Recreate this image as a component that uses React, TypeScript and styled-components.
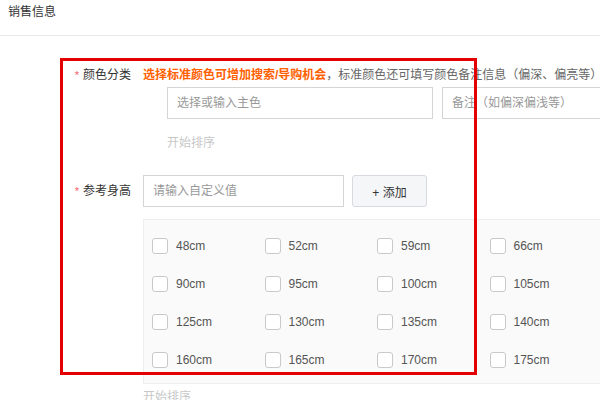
import React from "react";
import styled, { createGlobalStyle } from "styled-components";

const GlobalStyle = createGlobalStyle`
  html, body {
    margin: 0;
    padding: 0;
    overflow: hidden;
    background: #fff;
  }
  body {
    font-family: "Liberation Sans", "Noto Sans CJK SC", sans-serif;
    font-size: 12px;
    color: #333;
  }
`;

const Page = styled.div`
  position: relative;
  width: 600px;
  height: 400px;
  overflow: hidden;
`;

const SectionTitle = styled.div`
  height: 35px;
  line-height: 24px;
  padding-left: 8px;
  font-size: 12px;
  color: #333;
  border-bottom: 1px solid #e8e8e8;
`;

const Form = styled.div`
  padding-top: 29px;
`;

const FormRow = styled.div<{ $gap?: number }>`
  display: flex;
  margin-top: ${({ $gap }) => $gap ?? 0}px;
`;

const Label = styled.div<{ $top?: number }>`
  width: 131px;
  padding-right: 12px;
  flex-shrink: 0;
  text-align: right;
  line-height: 20px;
  margin-top: ${({ $top }) => $top ?? 0}px;
  white-space: nowrap;
`;

const Star = styled.span`
  color: #f4606c;
  margin-right: 4px;
  font-size: 11px;
`;

const Content = styled.div`
  flex: 1;
  min-width: 0;
`;

const Tip = styled.div`
  line-height: 20px;
  white-space: nowrap;
  color: #666;
`;

const Highlight = styled.b`
  color: #ff6000;
  font-weight: bold;
`;

const Indented = styled.div`
  padding-left: 24px;
`;

const InputGroup = styled.div<{ $top?: number }>`
  display: flex;
  align-items: center;
  gap: 9px;
  margin-top: ${({ $top }) => $top ?? 0}px;
`;

const TextInput = styled.input<{ $width: number }>`
  box-sizing: border-box;
  width: ${({ $width }) => $width}px;
  height: 32px;
  padding: 0 9px;
  flex-shrink: 0;
  border: 1px solid #d5d5d5;
  border-radius: 0;
  font-family: inherit;
  font-size: 12px;
  color: #333;
  outline: none;
  &::placeholder {
    color: #999;
  }
`;

const AddButton = styled.button`
  box-sizing: border-box;
  width: 75px;
  height: 32px;
  margin-left: -1px;
  border: 1px solid #d8dadf;
  border-radius: 3px;
  background: #f5f6f8;
  font-family: inherit;
  font-size: 12px;
  color: #333;
`;

const SortLink = styled.div<{ $top: number }>`
  margin-top: ${({ $top }) => $top}px;
  line-height: 20px;
  color: #c8c8c8;
`;

const OptionPanel = styled.div`
  margin-top: 12px;
  width: 570px;
  padding: 7px 0 4px 8px;
  background: #fafafa;
  border: 1px solid #eeeeee;
  display: grid;
  grid-template-columns: repeat(5, 112.5px);
  grid-auto-rows: 38px;
`;

const Option = styled.label`
  display: flex;
  align-items: center;
  gap: 8px;
  color: #555;
  font-size: 12px;
`;

const Box = styled.span`
  box-sizing: border-box;
  width: 16px;
  height: 16px;
  border: 1px solid #c9c9c9;
  border-radius: 3px;
  background: #fff;
`;

const Annotation = styled.div`
  position: absolute;
  left: 60px;
  top: 58px;
  width: 417px;
  height: 317px;
  box-sizing: border-box;
  border: 3px solid #e40000;
  pointer-events: none;
`;

// five per row, the fifth column sits just past the right edge of the view
const heights = [
  48, 52, 59, 66, 80, 90, 95, 100, 105, 110, 125, 130, 135, 140, 150, 160, 165,
  170, 175, 180,
];

export default function App() {
  return (
    <Page>
      <GlobalStyle />
      <SectionTitle>销售信息</SectionTitle>
      <Form>
        <FormRow>
          <Label>
            <Star>*</Star>颜色分类
          </Label>
          <Content>
            <Tip>
              <Highlight>选择标准颜色可增加搜索/导购机会</Highlight>
              ，标准颜色还可填写颜色备注信息（偏深、偏亮等）
            </Tip>
            <Indented>
              <InputGroup $top={2}>
                <TextInput $width={266} placeholder="选择或输入主色" />
                <TextInput $width={266} placeholder="备注（如偏深偏浅等）" />
              </InputGroup>
              <SortLink $top={14}>开始排序</SortLink>
            </Indented>
          </Content>
        </FormRow>

        <FormRow $gap={22}>
          <Label $top={6}>
            <Star>*</Star>参考身高
          </Label>
          <Content>
            <InputGroup>
              <TextInput $width={201} placeholder="请输入自定义值" />
              <AddButton>+ 添加</AddButton>
            </InputGroup>
            <OptionPanel>
              {heights.map((h) => (
                <Option key={h}>
                  <Box />
                  {h}cm
                </Option>
              ))}
            </OptionPanel>
            <SortLink $top={3}>开始排序</SortLink>
          </Content>
        </FormRow>
      </Form>
      <Annotation />
    </Page>
  );
}
